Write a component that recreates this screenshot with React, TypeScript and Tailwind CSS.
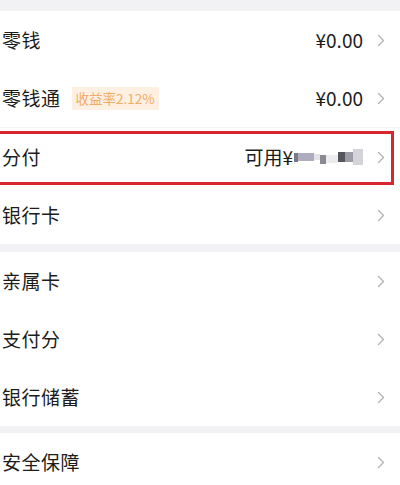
import React from 'react';

type Row = {
  label: string;
  value?: React.ReactNode;
  badge?: string;
  highlight?: boolean;
};

function Chevron() {
  return (
    <svg width="8" height="13" viewBox="0 0 8 13" className="ml-[14px] shrink-0">
      <path d="M1.5 1.5 L6.5 6.5 L1.5 11.5" fill="none" stroke="#b4b4b4" strokeWidth="1.4" strokeLinecap="round" strokeLinejoin="round" />
    </svg>
  );
}

function Masked() {
  // pixelated amount, as in the screenshot
  return (
    <span className="inline-flex items-center ml-[1px] h-[18px]">
      <span className="w-[4px] h-[9px] bg-[#7a7a84]" />
      <span className="w-[16px] h-[8px] bg-[#aeacbe]" />
      <span className="w-[6px] h-[6px] bg-[#e4e4e8]" />
      <span className="w-[6px] h-[9px] bg-[#8a8a92] mt-[4px]" />
      <span className="w-[12px] h-[8px] bg-[#ececef] mt-[4px]" />
      <span className="w-[7px] h-[10px] bg-[#55555c]" />
      <span className="w-[8px] h-[10px] bg-[#9c9ca4]" />
      <span className="w-[10px] h-[16px] bg-[#d4d4da]" />
    </span>
  );
}

function ListRow({ label, value, badge, highlight }: Row) {
  return (
    <div className="relative h-[58px] flex items-center pl-[2px] pr-[15px]">
      <span className="text-[19px] text-[#1c1c1c] tracking-[0.5px]">{label}</span>
      {badge && (
        <span className="ml-[11px] px-[4px] h-[23px] flex items-center bg-[#fdf0e2] text-[#f2ac68] text-[13.5px]">
          {badge}
        </span>
      )}
      <span className="ml-auto flex items-center text-[19px] text-[#1c1c1c]">{value}</span>
      <Chevron />
      {highlight && (
        <div className="absolute top-[3px] bottom-[1px] left-[-3px] right-[6px] border-[3px] border-[#d7262d] pointer-events-none" />
      )}
    </div>
  );
}

export default function App() {
  const font = { fontFamily: '"Noto Sans CJK SC", "Noto Sans", sans-serif' };
  return (
    <div className="w-[400px] h-[485px] overflow-hidden bg-white" style={font}>
      <div className="h-[11px] bg-[#f2f2f4]" />
      <ListRow label="零钱" value="¥0.00" />
      <ListRow label="零钱通" badge="收益率2.12%" value="¥0.00" />
      <div className="h-0 border-t border-[#f3f3f3]" />
      <ListRow
        label="分付"
        highlight
        value={
          <>
            可用¥<Masked />
          </>
        }
      />
      <ListRow label="银行卡" />
      <div className="h-[8px] bg-[#f2f2f4]" />
      <ListRow label="亲属卡" />
      <ListRow label="支付分" />
      <ListRow label="银行储蓄" />
      <div className="h-[7px] bg-[#f2f2f4]" />
      <ListRow label="安全保障" />
    </div>
  );
}
